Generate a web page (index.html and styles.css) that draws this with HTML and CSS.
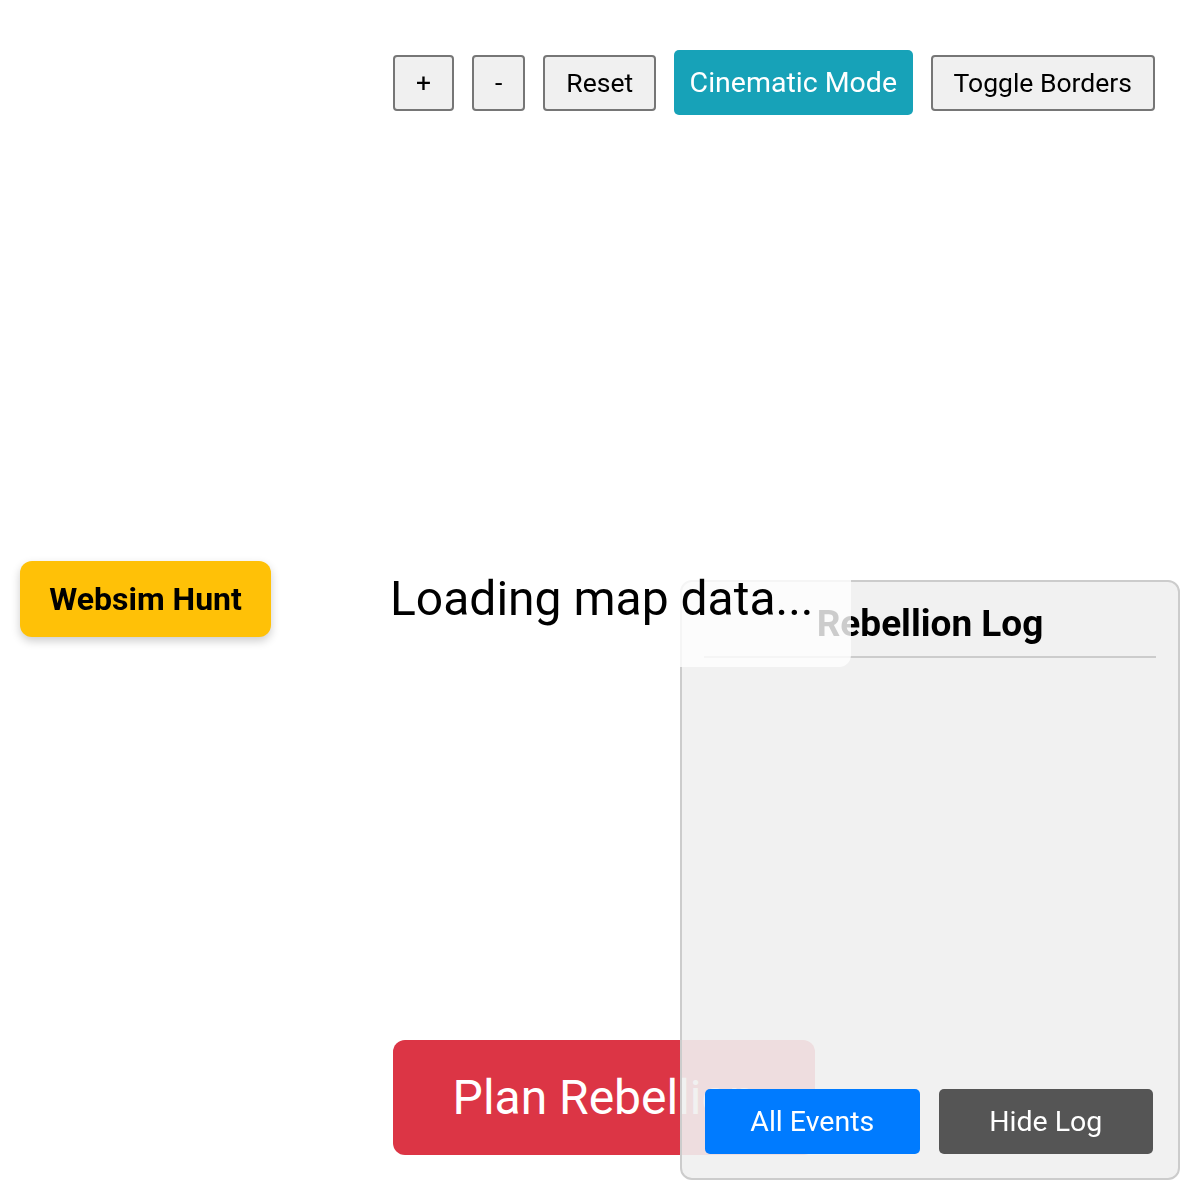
FILE: index.html
```html
<!DOCTYPE html>
<html>
<head>
<meta charset="utf-8">
<link rel="stylesheet" href="styles.css">
</head>
<body>
<div class="map"></div>
<div class="controls">
  <button class="ctl">+</button>
  <button class="ctl">-</button>
  <button class="ctl">Reset</button>
  <button class="ctl ctl-active">Cinematic Mode</button>
  <button class="ctl">Toggle Borders</button>
</div>
<button class="hunt">Websim Hunt</button>
<button class="plan">Plan Rebellion</button>
<aside class="log">
  <h2 class="log-title">Rebellion Log</h2>
  <div class="log-list"></div>
  <div class="log-actions">
    <button class="log-btn log-btn-blue">All Events</button>
    <button class="log-btn log-btn-grey">Hide Log</button>
  </div>
</aside>
<div class="loading">Loading map data...</div>
</body>
</html>
```
FILE: styles.css
```css
html, body {
  margin: 0;
  padding: 0;
  width: 1200px;
  height: 1200px;
  background: #fff;
  font-family: Roboto, "Liberation Sans", sans-serif;
  overflow: hidden;
}
button {
  font-family: Roboto, "Liberation Sans", sans-serif;
  cursor: pointer;
}
.map {
  width: 1200px;
  height: 1200px;
}
.controls {
  position: fixed;
  top: 50px;
  right: 45px;
  height: 65px;
  display: flex;
  align-items: center;
  gap: 18px;
}
.ctl {
  box-sizing: border-box;
  height: 56px;
  padding: 0 21px;
  font-size: 26.5px;
  color: #000;
  background: #f0f0f0;
  border: 2px solid #767676;
  border-radius: 4px;
}
.ctl-active {
  height: 65px;
  padding: 0 15.5px;
  font-size: 28.5px;
  color: #fff;
  background: #17a2b8;
  border: none;
  border-radius: 5px;
}
.hunt {
  position: fixed;
  left: 20px;
  top: 561px;
  width: 251px;
  height: 76px;
  padding: 0;
  font-size: 32px;
  font-weight: 700;
  color: #000;
  background: #ffc107;
  border: none;
  border-radius: 12px;
  box-shadow: 0 4px 10px rgba(0, 0, 0, 0.2);
}
.plan {
  position: fixed;
  left: 393px;
  bottom: 45px;
  width: 422px;
  height: 115px;
  padding: 0;
  font-size: 48px;
  color: #fff;
  background: #dc3545;
  border: none;
  border-radius: 12px;
}
.log {
  position: fixed;
  right: 20px;
  bottom: 20px;
  width: 500px;
  height: 600px;
  box-sizing: border-box;
  padding: 20px 22px 24px;
  background: rgba(240, 240, 240, 0.9);
  border: 2px solid #ccc;
  border-radius: 12px;
  display: flex;
  flex-direction: column;
}
.log-title {
  margin: 0;
  padding: 0 0 11px;
  font-size: 37px;
  font-weight: 700;
  text-align: center;
  border-bottom: 2px solid #ccc;
}
.log-list {
  flex: 1;
}
.log-actions {
  display: flex;
  gap: 19px;
  padding: 0 3px 0 1px;
}
.log-btn {
  flex: 1;
  height: 65px;
  font-size: 28.5px;
  color: #fff;
  border: none;
  border-radius: 5px;
}
.log-btn-blue { background: #007bff; }
.log-btn-grey { background: #555; }
.loading {
  position: fixed;
  left: 350px;
  top: 530px;
  width: 501px;
  height: 137px;
  box-sizing: border-box;
  padding: 0 40px;
  display: flex;
  align-items: center;
  font-size: 48px;
  color: #000;
  background: rgba(255, 255, 255, 0.8);
  border-radius: 12px;
  white-space: nowrap;
}
```
